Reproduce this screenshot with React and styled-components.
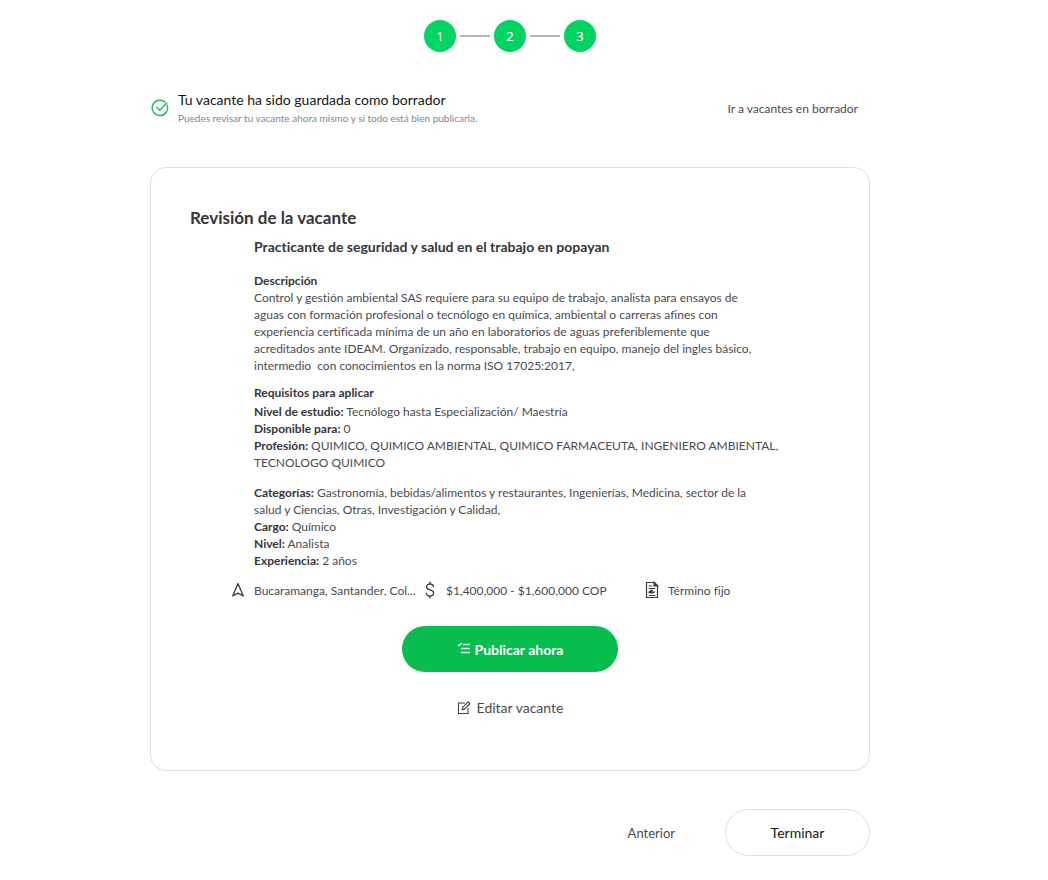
import React from "react";
import styled, { createGlobalStyle } from "styled-components";

const GlobalStyle = createGlobalStyle`
  *, *::before, *::after { box-sizing: border-box; }
  body {
    margin: 0;
    background: #fff;
    color: #4a4a4f;
    font-family: Lato, "Open Sans", sans-serif;
    font-size: 12px;
    line-height: 17px;
    font-variant-ligatures: none;
  }
  h1, h2, h3, p, ol { margin: 0; padding: 0; }
  button { font-family: inherit; cursor: pointer; }
  svg { display: block; flex: none; }
`;

const Page = styled.main`
  max-width: 1020px;
  padding: 20px 16px 24px;
`;

const Content = styled.div`
  max-width: 720px;
  margin: 0 auto;
`;

const Steps = styled.ol`
  display: flex;
  justify-content: center;
  align-items: center;
  gap: 4px;
  list-style: none;
`;

const Step = styled.li`
  display: grid;
  place-items: center;
  width: 32px;
  height: 32px;
  border-radius: 50%;
  background: #00d563;
  color: #fff;
  font: 13px "Noto Sans", sans-serif;
`;

const StepLine = styled.li`
  width: 30px;
  height: 2px;
  background: #b5b5b5;
`;

const Notice = styled.section`
  display: flex;
  justify-content: space-between;
  align-items: center;
  margin-top: 38px;
  padding-right: 12px;
`;

const NoticeInfo = styled.div`
  display: flex;
  align-items: center;
  gap: 9px;
  padding-left: 1px;
`;

const NoticeTitle = styled.p`
  color: #151515;
  font-size: 14px;
  line-height: 20px;
`;

const NoticeText = styled.p`
  color: #85858a;
  font-size: 10px;
  line-height: 16px;
`;

const DraftLink = styled.a`
  color: #4a4a4f;
  font-size: 12px;
  text-decoration: none;
`;

const Card = styled.section`
  margin-top: 41px;
  padding: 38px 39px 52px;
  border: 1px solid #dfdfe1;
  border-radius: 16px;
`;

const CardTitle = styled.h1`
  color: #35353a;
  font-size: 17px;
  font-weight: 700;
  line-height: 24px;
`;

const Details = styled.div`
  padding: 8px 0 0 64px;
  white-space: pre-wrap;
`;

const JobTitle = styled.h2`
  color: #35353a;
  font-size: 14px;
  font-weight: 700;
  line-height: 18px;
  margin-bottom: 16px;
`;

const SectionTitle = styled.h3`
  color: #35353a;
  font-size: 12px;
  font-weight: 700;
  line-height: 17px;
  margin-bottom: ${(p) => p.$gap || 0}px;
`;

const Block = styled.div`
  margin-bottom: ${(p) => p.$gap}px;
  strong { color: #35353a; }
`;

const Facts = styled.div`
  display: grid;
  grid-template-columns: 194px 220px 1fr;
  align-items: center;
  padding-left: 40px;
`;

const Fact = styled.div`
  display: flex;
  align-items: center;
  gap: 8px;
  height: 20px;
  white-space: nowrap;
`;

const Actions = styled.div`
  display: flex;
  flex-direction: column;
  align-items: center;
  gap: 26px;
  margin-top: 26px;
`;

const PublishButton = styled.button`
  display: flex;
  justify-content: center;
  align-items: center;
  gap: 4px;
  width: 216px;
  height: 46px;
  border: 0;
  border-radius: 23px;
  background: #06bd4e;
  color: #fff;
  font-size: 14px;
  font-weight: 700;
`;

const TextButton = styled.button`
  display: flex;
  align-items: center;
  gap: 6px;
  padding: 0;
  border: 0;
  background: none;
  color: #4a4a4f;
  font-size: ${(p) => p.$size || 14}px;
  line-height: 20px;
`;

const Footer = styled.footer`
  display: flex;
  justify-content: flex-end;
  align-items: center;
  gap: 50px;
  margin-top: 38px;
`;

const FinishButton = styled.button`
  width: 145px;
  height: 47px;
  border: 1px solid #dfdfe1;
  border-radius: 24px;
  background: #fff;
  color: #151515;
  font-size: 14px;
`;

const CheckIcon = () => (
  <svg width="18" height="18" viewBox="0 0 18 18" fill="none" stroke="#1dbb5a" strokeWidth="1.4" strokeLinecap="round" strokeLinejoin="round" aria-hidden="true">
    <path d="M16.1 6.2A7.7 7.7 0 1 1 13.7 2.9" />
    <path d="M5.8 8.5 8.8 11.3 15.7 3.9" />
  </svg>
);

const LocationIcon = () => (
  <svg width="16" height="18" viewBox="0 0 16 18" fill="none" stroke="#3c3c41" strokeWidth="1.3" strokeLinejoin="round" aria-hidden="true">
    <path d="M8 2.5 2.7 14.9 8 12.2l5.3 2.7Z" />
  </svg>
);

const MoneyIcon = () => (
  <svg width="14" height="18" viewBox="0 0 14 18" fill="none" stroke="#3c3c41" strokeWidth="1.3" strokeLinecap="round" aria-hidden="true">
    <path d="M6 1v2M6 15v2M9.5 5.5C9.3 3.9 8 3 6 3 3.9 3 2.5 4.1 2.5 5.9c0 4 7.1 2.1 7.1 6.1C9.6 13.9 8.2 15 6 15s-3.5-1.1-3.6-2.8" />
  </svg>
);

const ContractIcon = () => (
  <svg width="16" height="18" viewBox="0 0 16 18" fill="none" stroke="#3c3c41" strokeWidth="1.2" aria-hidden="true">
    <path d="M2.5 1.5h8l3 3v12h-11Z" />
    <path d="M10 1.5v3.5h3.5Z" fill="#3c3c41" />
    <path d="M4.7 5h3.5M4.7 7.5h6.5M4.7 14.5h6.8" />
    <path d="M5 12.2c1-3 3.2-3.5 3-2.1-.2 1.3-2.6 2.4-2.7 1.1-.1-1.2 2.5.9 3.5.5l2-1" strokeWidth="1.5" />
  </svg>
);

const ListIcon = () => (
  <svg width="14" height="14" viewBox="0 0 14 14" fill="none" stroke="#fff" aria-hidden="true">
    <path d="M6 2.5h7M4 6.5h9M4 10.5h9" strokeWidth="1.4" opacity=".85" />
    <path d="m1 2.7 1.2 1L4.6 1" strokeWidth="1.3" />
  </svg>
);

const EditIcon = () => (
  <svg width="14" height="14" viewBox="0 0 14 14" fill="none" stroke="#3c3c41" strokeWidth="1.1" strokeLinejoin="round" aria-hidden="true">
    <path d="M8 2H1.5v10.5H11V7" />
    <path d="m5 8.8.7-2.5L11.2.8 13 2.6 7.5 8.1Z" />
  </svg>
);

export default function App() {
  return (
    <>
      <GlobalStyle />
      <Page>
        <Content>
          <Steps>
            <Step>1</Step>
            <StepLine aria-hidden="true" />
            <Step>2</Step>
            <StepLine aria-hidden="true" />
            <Step>3</Step>
          </Steps>

          <Notice>
            <NoticeInfo>
              <CheckIcon />
              <div>
                <NoticeTitle>Tu vacante ha sido guardada como borrador</NoticeTitle>
                <NoticeText>Puedes revisar tu vacante ahora mismo y si todo está bien publicarla.</NoticeText>
              </div>
            </NoticeInfo>
            <DraftLink href="#borradores">Ir a vacantes en borrador</DraftLink>
          </Notice>

          <Card>
            <CardTitle>Revisión de la vacante</CardTitle>
            <Details>
              <JobTitle>Practicante de seguridad y salud en el trabajo en popayan</JobTitle>
              <SectionTitle>Descripción</SectionTitle>
              <Block $gap={10}>
                Control y gestión ambiental SAS requiere para su equipo de trabajo, analista para ensayos de<br />
                aguas con formación profesional o tecnólogo en química, ambiental o carreras afines con<br />
                experiencia certificada mínima de un año en laboratorios de aguas preferiblemente que<br />
                acreditados ante IDEAM. Organizado, responsable, trabajo en equipo, manejo del ingles básico,<br />
                {"intermedio  con conocimientos en la norma ISO 17025:2017,"}
              </Block>
              <SectionTitle $gap={2}>Requisitos para aplicar</SectionTitle>
              <Block $gap={13}>
                <p><strong>Nivel de estudio:</strong> Tecnólogo hasta Especialización/ Maestría</p>
                <p><strong>Disponible para:</strong> 0</p>
                <p>
                  <strong>Profesión:</strong> QUIMICO, QUIMICO AMBIENTAL, QUIMICO FARMACEUTA, INGENIERO AMBIENTAL,<br />
                  TECNOLOGO QUIMICO
                </p>
              </Block>
              <Block $gap={11}>
                <p>
                  <strong>Categorías:</strong> Gastronomía, bebidas/alimentos y restaurantes, Ingenierías, Medicina, sector de la<br />
                  salud y Ciencias, Otras, Investigación y Calidad,
                </p>
                <p><strong>Cargo:</strong> Químico</p>
                <p><strong>Nivel:</strong> Analista</p>
                <p><strong>Experiencia:</strong> 2 años</p>
              </Block>
            </Details>
            <Facts>
              <Fact><LocationIcon />Bucaramanga, Santander, Col...</Fact>
              <Fact><MoneyIcon />$1,400,000 - $1,600,000 COP</Fact>
              <Fact><ContractIcon />Término fijo</Fact>
            </Facts>
            <Actions>
              <PublishButton type="button"><ListIcon />Publicar ahora</PublishButton>
              <TextButton type="button"><EditIcon />Editar vacante</TextButton>
            </Actions>
          </Card>

          <Footer>
            <TextButton type="button" $size={13}>Anterior</TextButton>
            <FinishButton type="button">Terminar</FinishButton>
          </Footer>
        </Content>
      </Page>
    </>
  );
}
